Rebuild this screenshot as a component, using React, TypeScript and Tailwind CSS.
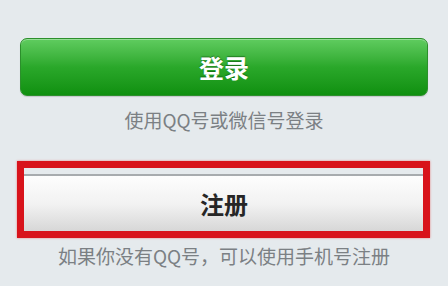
import React from 'react';

const cjk = { fontFamily: '"Noto Sans CJK SC", "Noto Sans", sans-serif' };

export default function App() {
  return (
    <div className="w-[448px] h-[286px] bg-[#e5eaed] px-5 pt-[38px] overflow-hidden" style={cjk}>
      {/* Login */}
      <button className="w-full h-[58px] rounded-[7px] border border-[#2c8f2c] bg-gradient-to-b from-[#5fcc5f] via-[#2aa82a] to-[#0f900f] shadow-[inset_0_1px_0_rgba(255,255,255,0.35),0_1px_1px_rgba(0,0,0,0.15)] flex items-center justify-center">
        <span className="text-[25px] font-bold text-white leading-none [text-shadow:0_-1px_1px_rgba(0,60,0,0.5)]">登录</span>
      </button>
      <p className="mt-3 text-center text-[19px] leading-6 text-[#7b8084]">使用QQ号或微信号登录</p>

      {/* Register */}
      <div className="relative mt-[42px]">
        <button className="w-full h-[58px] border-t-2 border-[#a7abae] bg-gradient-to-b from-[#fdfdfd] via-[#f2f2f2] to-[#d6d6d6] flex items-center justify-center">
          <span className="text-[24px] font-bold text-[#262626] leading-none">注册</span>
        </button>
        <div className="absolute left-[-3px] right-[-2px] top-[-13px] bottom-[-6px] border-[7px] border-[#d8131b] shadow-[0_0_2px_rgba(230,60,60,0.6)] pointer-events-none" />
      </div>
      <p className="mt-3 text-center text-[19px] leading-6 text-[#7b8084]">如果你没有QQ号，可以使用手机号注册</p>
    </div>
  );
}
